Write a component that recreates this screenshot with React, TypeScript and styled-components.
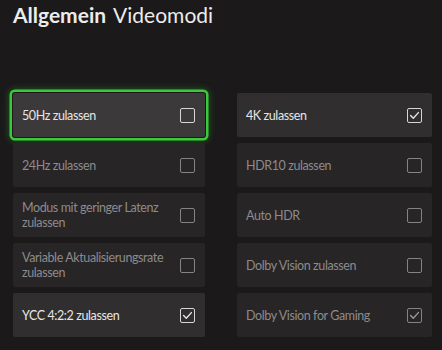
import { createGlobalStyle } from "styled-components";
import styled from "styled-components";

type Setting = {
    id: string;
    label: string;
    checked: boolean;
    disabled?: boolean;
    focused?: boolean;
};

const leftSettings: Setting[] = [
    { id: "50hz", label: "50Hz zulassen", checked: false, focused: true },
    { id: "24hz", label: "24Hz zulassen", checked: false, disabled: true },
    { id: "allm", label: "Modus mit geringer Latenz zulassen", checked: false, disabled: true },
    { id: "vrr", label: "Variable Aktualisierungsrate zulassen", checked: false, disabled: true },
    { id: "ycc", label: "YCC 4:2:2 zulassen", checked: true },
];

const rightSettings: Setting[] = [
    { id: "4k", label: "4K zulassen", checked: true },
    { id: "hdr10", label: "HDR10 zulassen", checked: false, disabled: true },
    { id: "autohdr", label: "Auto HDR", checked: false, disabled: true },
    { id: "dolby", label: "Dolby Vision zulassen", checked: false, disabled: true },
    { id: "dolbygaming", label: "Dolby Vision for Gaming", checked: true, disabled: true },
];

const GlobalStyle = createGlobalStyle`
  html, body {
    margin: 0;
    padding: 0;
    background: #1b191a;
  }
  body {
    font-family: Lato, "Noto Sans", sans-serif;
    color: #e8e8e8;
  }
`;

export default function App() {
    return (
        <>
            <GlobalStyle />
            <Page>
                <Header>
                    <Section>Allgemein</Section>
                    <SubSection>Videomodi</SubSection>
                </Header>
                <Grid>
                    <Column>
                        {leftSettings.map((s) => (
                            <SettingTile key={s.id} setting={s} />
                        ))}
                    </Column>
                    <Column>
                        {rightSettings.map((s) => (
                            <SettingTile key={s.id} setting={s} />
                        ))}
                    </Column>
                </Grid>
            </Page>
        </>
    );
}

const SettingTile = ({ setting }: { setting: Setting }) => (
    <Tile $focused={setting.focused} $disabled={setting.disabled}>
        <Label $disabled={setting.disabled}>{setting.label}</Label>
        <CheckBox $disabled={setting.disabled}>
            {setting.checked && (
                <svg width="11" height="11" viewBox="0 0 11 11">
                    <path d="M1.6 5.6 L4.3 8.2 L9.4 2.6" fill="none" stroke="currentColor" strokeWidth="1.4" strokeLinecap="round" strokeLinejoin="round" />
                </svg>
            )}
        </CheckBox>
    </Tile>
);

const Page = styled.div`
  width: 442px;
  height: 350px;
  padding: 2px 0 0 13px;
  box-sizing: border-box;
  overflow: hidden;
`;

const Header = styled.div`
  display: flex;
  align-items: baseline;
  gap: 7px;
  height: 26px;
  line-height: 26px;
  font-size: 21px;
  color: #ececec;
`;

const Section = styled.span`
  font-weight: 700;
`;

const SubSection = styled.span`
  font-weight: 400;
`;

const Grid = styled.div`
  display: grid;
  grid-template-columns: 192px 195px;
  column-gap: 32px;
  margin-top: 65px;
`;

const Column = styled.div`
  display: flex;
  flex-direction: column;
  gap: 6px;
`;

const Tile = styled.div<{ $focused?: boolean; $disabled?: boolean }>`
  display: flex;
  align-items: center;
  justify-content: space-between;
  height: 44px;
  padding: 0 10px 0 9px;
  box-sizing: border-box;
  border-radius: 2px;
  background: ${(p) => (p.$focused ? "#3b393a" : p.$disabled ? "#272526" : "#302e2f")};
  box-shadow: ${(p) =>
        p.$focused
            ? "0 0 0 1px #1b191a, 0 0 0 3.5px #3cc83c, 0 0 7px 4px rgba(40, 200, 40, 0.35)"
            : "none"};
`;

const Label = styled.span<{ $disabled?: boolean }>`
  font-size: 12.5px;
  line-height: 15px;
  letter-spacing: -0.4px;
  max-width: 160px;
  color: ${(p) => (p.$disabled ? "#8d8b8c" : "#e6e6e6")};
`;

const CheckBox = styled.div<{ $disabled?: boolean }>`
  flex: none;
  width: 15px;
  height: 15px;
  box-sizing: border-box;
  border: 1.5px solid ${(p) => (p.$disabled ? "#858384" : "#d6d6d6")};
  border-radius: 2px;
  display: flex;
  align-items: center;
  justify-content: center;
  color: ${(p) => (p.$disabled ? "#9a9899" : "#e6e6e6")};
`;
